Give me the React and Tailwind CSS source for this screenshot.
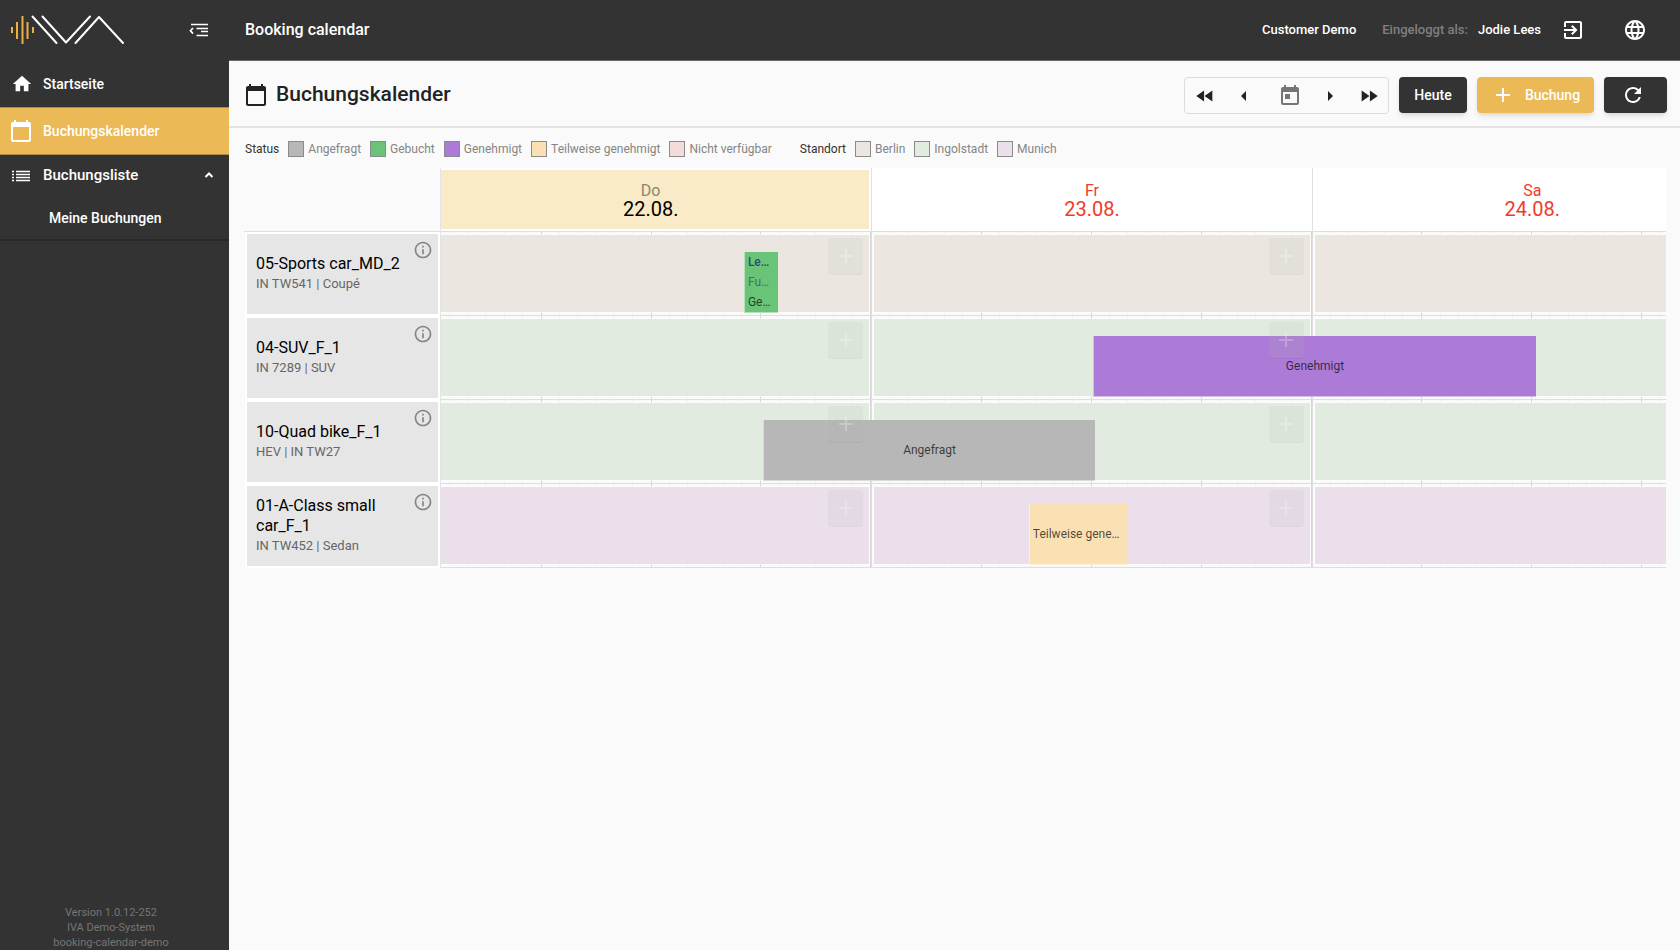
import React from 'react';
import {
  MdAdd,
  MdArrowLeft,
  MdArrowRight,
  MdCalendarToday,
  MdExitToApp,
  MdFastForward,
  MdFastRewind,
  MdHome,
  MdInfoOutline,
  MdLanguage,
  MdRefresh,
  MdToday,
} from 'react-icons/md';

const STATUS = [
  { label: 'Angefragt', color: 'bg-[#b7b7b7]' },
  { label: 'Gebucht', color: 'bg-[#69c478]' },
  { label: 'Genehmigt', color: 'bg-[#ac7bd7]' },
  { label: 'Teilweise genehmigt', color: 'bg-[#fae1b4]' },
  { label: 'Nicht verfügbar', color: 'bg-[#f4dcdc]' },
];

const LOCATIONS = [
  { label: 'Berlin', color: 'bg-[#ebe6e0]' },
  { label: 'Ingolstadt', color: 'bg-[#e1ebe0]' },
  { label: 'Munich', color: 'bg-[#ebdfec]' },
];

const DAYS = [
  { name: 'Do', date: '22.08.', today: true },
  { name: 'Fr', date: '23.08.' },
  { name: 'Sa', date: '24.08.' },
];

// start and end are hours since the first visible midnight
const VEHICLES = [
  {
    name: '05-Sports car_MD_2',
    info: 'IN TW541 | Coupé',
    color: 'bg-[#ebe6e0]',
    booking: { start: 17, end: 18.85, color: 'bg-[#69c478]', customer: 'Lees Jodie', purpose: 'Funktionstest', label: 'Gebucht' },
  },
  {
    name: '04-SUV_F_1',
    info: 'IN 7289 | SUV',
    color: 'bg-[#e1ebe0]',
    booking: { start: 36.05, end: 60.15, color: 'bg-[#ac7bd7]', label: 'Genehmigt' },
  },
  {
    name: '10-Quad bike_F_1',
    info: 'HEV | IN TW27',
    color: 'bg-[#e1ebe0]',
    booking: { start: 18.03, end: 36.15, color: 'bg-[#b7b7b7]', label: 'Angefragt' },
  },
  {
    name: '01-A-Class small car_F_1',
    info: 'IN TW452 | Sedan',
    color: 'bg-[#ebdfec]',
    booking: { start: 32.53, end: 37.88, color: 'bg-[#fae1b4]', label: 'Teilweise genehmigt' },
  },
];

const TOTAL_HOURS = DAYS.length * 24;
const percent = (hours) => `${(hours / TOTAL_HOURS) * 100}%`;

function Logo() {
  return (
    <svg width="114" height="30" viewBox="0 0 114 30" fill="none" strokeLinecap="round">
      <g stroke="#e9b044" strokeWidth="2" strokeLinecap="butt">
        <path d="M2 12v6M7 7v17M12.500 1v28M17.500 7v17M23 12v6" />
      </g>
      <g stroke="#fff" strokeWidth="2" strokeLinejoin="round">
        <path d="M22.500 1.500L46.500 28" />
        <path d="M32.500 1.500L56 27.500L80 1.500" />
        <path d="M65.500 28L89 2L113 28" />
      </g>
    </svg>
  );
}

function FoldIcon() {
  return (
    <svg width="20" height="14" viewBox="0 0 20 14" fill="none" stroke="currentColor">
      <path d="M2 1.500H19M7.500 5.500H19M12 8.500H19M7.500 12.500H19" strokeWidth="1.700" />
      <path d="M4 5L1.500 7.800L4 10.600" strokeWidth="1.700" />
    </svg>
  );
}

function ListIcon() {
  return (
    <svg width="20" height="12" viewBox="0 0 20 12" stroke="currentColor" strokeWidth="1.700">
      <path d="M1 1.500h2M1 4.500h2M1 7.500h2M1 10.500h2M5 1.500h14M5 4.500h14M5 7.500h14M5 10.500h14" />
    </svg>
  );
}

function CaretUp() {
  return (
    <svg width="10" height="8" viewBox="0 0 10 8" fill="none" stroke="currentColor" className="mb-[3px] ml-auto">
      <path d="M1.500 6L5 2.500L8.500 6" strokeWidth="2" />
    </svg>
  );
}

function Sidebar() {
  return (
    <aside className="flex w-[229px] shrink-0 flex-col bg-[#333] text-white">
      <div className="flex h-[61px] items-center justify-between pr-5 pb-px pl-[10px]">
        <Logo />
        <button type="button" aria-label="Menü einklappen">
          <FoldIcon />
        </button>
      </div>
      <nav className="border-b-2 border-[#292929] text-sm font-medium">
        <a href="#home" className="flex h-[46px] items-center gap-[10px] pl-[11px]">
          <span className="flex w-[22px] justify-center">
            <MdHome size={22} />
          </span>
          Startseite
        </a>
        <a
          href="#calendar"
          className="flex h-12 items-center gap-[10px] border-y border-[#b08c42] bg-[#ebb955] pl-[9px]"
        >
          <MdCalendarToday size={24} />
          Buchungskalender
        </a>
        <button type="button" className="flex h-[42px] w-full items-center pr-[15px] pl-[11px] text-[15px]">
          <ListIcon />
          <span className="ml-3">Buchungsliste</span>
          <CaretUp />
        </button>
        <a href="#own" className="flex h-[42px] items-center pl-[49px]">
          Meine Buchungen
        </a>
      </nav>
      <p className="mt-auto pr-[7px] text-center text-[11px] leading-[15px] text-[#757575]">
        Version 1.0.12-252
        <br />
        IVA Demo-System
        <br />
        booking-calendar-demo
      </p>
    </aside>
  );
}

function TopBar() {
  return (
    <header className="flex h-[61px] items-center border-b border-[#666] bg-[#333] pr-[33px] pl-4 text-white">
      <span className="text-base font-medium">Booking calendar</span>
      <div className="ml-auto flex items-center text-[13px] font-medium">
        <span>Customer Demo</span>
        <span className="ml-[26px] text-[#808080]">Eingeloggt als:</span>
        <span className="ml-[10px]">Jodie Lees</span>
        <button type="button" aria-label="Abmelden" className="ml-5">
          <MdExitToApp size={24} />
        </button>
        <button type="button" aria-label="Sprache" className="ml-[38px]">
          <MdLanguage size={24} />
        </button>
      </div>
    </header>
  );
}

function PageHeader() {
  return (
    <div className="flex h-[67px] items-center border-b-2 border-[#e4e4e4] pt-[3px] pr-[13px] pl-[15px]">
      <MdCalendarToday size={24} className="text-[#222]" />
      <h1 className="ml-2 text-[21px] font-medium text-[#222]">Buchungskalender</h1>
      <div className="ml-auto flex gap-[10px] text-sm font-medium">
        <div className="flex h-[37px] items-center rounded-sm border border-[#dcdcdc] pt-[2px] text-[#222]">
          <button type="button" aria-label="Woche zurück" className="flex w-[39px] justify-center">
            <MdFastRewind size={22} />
          </button>
          <button type="button" aria-label="Tag zurück" className="flex w-[39px] justify-center">
            <MdArrowLeft size={24} />
          </button>
          <button type="button" aria-label="Datum wählen" className="flex w-[47px] justify-center pl-[7px] text-[#757575]">
            <MdToday size={24} />
          </button>
          <button type="button" aria-label="Tag vor" className="flex w-[39px] justify-center">
            <MdArrowRight size={24} />
          </button>
          <button type="button" aria-label="Woche vor" className="flex w-[39px] justify-center">
            <MdFastForward size={22} />
          </button>
        </div>
        <button type="button" className="h-9 w-[68px] rounded bg-[#333] text-white shadow-md">
          Heute
        </button>
        <button
          type="button"
          className="flex h-9 w-[117px] items-center justify-center gap-[10px] rounded bg-[#ebb955] text-white shadow-md"
        >
          <MdAdd size={24} />
          Buchung
        </button>
        <button
          type="button"
          aria-label="Aktualisieren"
          className="flex h-9 w-[63px] items-center justify-center rounded bg-[#333] pr-[5px] text-white shadow-md"
        >
          <MdRefresh size={24} />
        </button>
      </div>
    </div>
  );
}

function LegendGroup({ title, items }) {
  return (
    <div className="flex items-center gap-[9px]">
      <span className="text-[#333]">{title}</span>
      {items.map((item) => (
        <span key={item.label} className="flex items-center gap-1 text-[#858585]">
          <span className={`size-4 border border-[#8a8a8a] ${item.color}`} />
          {item.label}
        </span>
      ))}
    </div>
  );
}

function DayHeader({ day }) {
  return (
    <div className={`flex border-r border-[#e0e0e0] bg-white ${day.today ? 'py-[2px] pr-[2px]' : ''}`}>
      <div
        className={`flex flex-1 flex-col items-center justify-center ${
          day.today ? 'bg-[#f9eac8]' : 'text-[#f03a2b]'
        }`}
      >
        <span className={`text-base leading-[19px] ${day.today ? 'text-[#8d8672]' : ''}`}>{day.name}</span>
        <span className={`text-xl leading-[19px] ${day.today ? 'text-black' : ''}`}>{day.date}</span>
      </div>
    </div>
  );
}

function DayCell({ color }) {
  return (
    <div className="relative flex border-r border-[#dedede]">
      {/* hour lines, every sixth one is stronger */}
      <div className="absolute inset-0 grid grid-cols-4">
        {[0, 1, 2, 3].map((quarter) => (
          <div key={quarter} className="grid grid-cols-6 border-r border-[#d6d6d6]">
            {[0, 1, 2, 3, 4, 5].map((hour) => (
              <div key={hour} className="border-r border-[#f2f2f2] last:border-r-0" />
            ))}
          </div>
        ))}
      </div>
      <div className={`relative my-[3px] mr-[2px] ml-[2px] flex-1 ring-1 ring-white/50 ${color}`} />
      <button
        type="button"
        aria-label="Buchung hinzufügen"
        className="absolute top-[6px] right-[8px] z-20 flex h-9 w-[35px] items-center justify-center rounded bg-[#a9b8ab]/12 text-white/25 shadow-2xs"
      >
        <MdAdd size={24} />
      </button>
    </div>
  );
}

function Booking({ booking }) {
  return (
    <div
      className={`absolute top-5 bottom-[2px] z-10 flex flex-col justify-center border-b border-l border-white/50 px-[3px] text-xs ${booking.color}`}
      style={{ left: percent(booking.start), width: percent(booking.end - booking.start) }}
    >
      {booking.customer && (
        <>
          <span className="truncate leading-5 font-medium text-[#2d4d74]">{booking.customer}</span>
          <span className="truncate leading-5 text-[#3d6f80]">{booking.purpose}</span>
        </>
      )}
      <span className={`truncate leading-5 text-black/70 ${booking.customer ? '' : 'text-center'}`}>
        {booking.label}
      </span>
    </div>
  );
}

function VehicleLabel({ vehicle }) {
  return (
    <div className="border-2 border-white">
      <div className="relative flex h-full flex-col justify-center bg-[#e6e6e6] pr-8 pl-[9px]">
        <span className="text-base leading-5 text-black">{vehicle.name}</span>
        <span className="text-[13px] leading-5 whitespace-nowrap text-[#666]">{vehicle.info}</span>
        <button type="button" aria-label="Details" className="absolute top-[6px] right-[5px] text-[#858585]">
          <MdInfoOutline size={20} />
        </button>
      </div>
    </div>
  );
}

function Calendar() {
  return (
    <div className="mr-[14px] ml-[15px] flex">
      <div className="w-[196px] shrink-0">
        <div className="h-16 border-b border-[#dedede]" />
        <div className="grid auto-rows-[84px] pl-px">
          {VEHICLES.map((vehicle) => (
            <VehicleLabel key={vehicle.name} vehicle={vehicle} />
          ))}
        </div>
      </div>
      <div className="min-w-0 flex-1 overflow-hidden border-l border-[#e4e4e4]">
        {/* the timeline is wider than its viewport and slightly scrolled */}
        <div className="-ml-[9px] w-[calc(100%+96px)]">
          <div className="grid h-16 grid-cols-3 border-b border-[#dedede]">
            {DAYS.map((day) => (
              <DayHeader key={day.date} day={day} />
            ))}
          </div>
          <div className="grid auto-rows-[84px]">
            {VEHICLES.map((vehicle) => (
              <div key={vehicle.name} className="relative grid grid-cols-3 border-b border-[#dedede]">
                {DAYS.map((day) => (
                  <DayCell key={day.date} color={vehicle.color} />
                ))}
                <Booking booking={vehicle.booking} />
              </div>
            ))}
          </div>
        </div>
      </div>
    </div>
  );
}

function App() {
  return (
    <div className="flex min-h-screen bg-[#fafafa] font-['Roboto',sans-serif]">
      <Sidebar />
      <main className="min-w-0 flex-1">
        <TopBar />
        <PageHeader />
        <div className="flex h-10 items-center gap-7 pt-px pl-4 text-xs">
          <LegendGroup title="Status" items={STATUS} />
          <LegendGroup title="Standort" items={LOCATIONS} />
        </div>
        <Calendar />
      </main>
    </div>
  );
}

export default App;
